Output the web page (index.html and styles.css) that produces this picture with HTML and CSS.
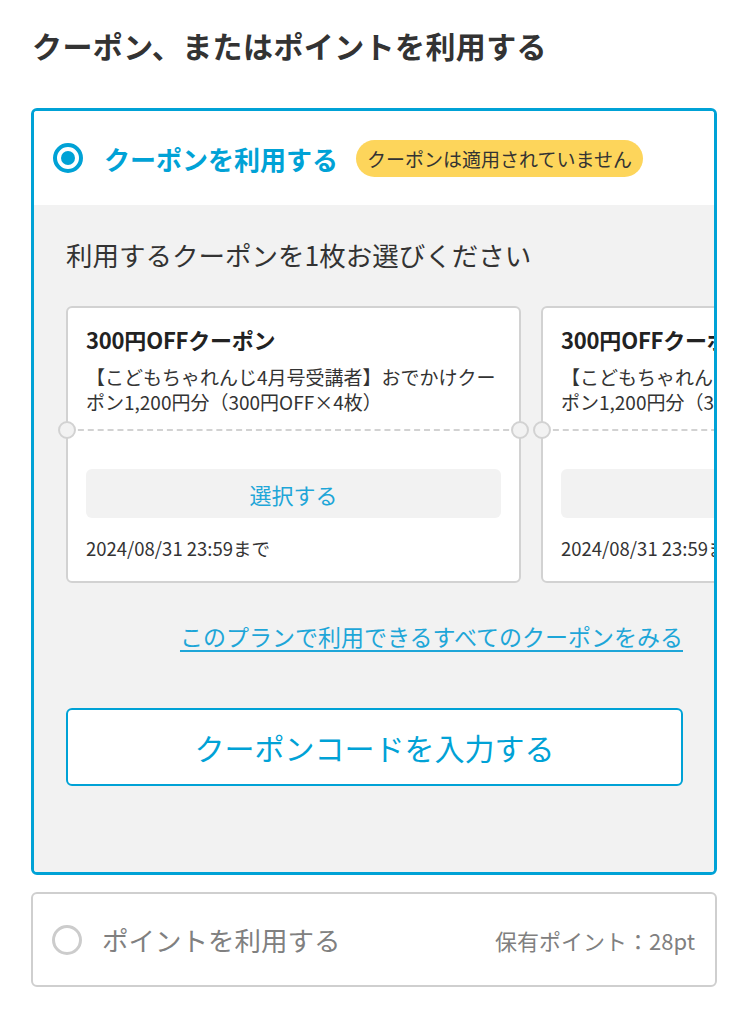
FILE: index.html
```html
<!DOCTYPE html>
<html lang="ja">
<head>
    <meta charset="UTF-8">
    <meta name="viewport" content="width=device-width, initial-scale=1.0">
    <title>クーポン、またはポイントを利用する</title>
    <link rel="stylesheet" href="styles.css">
</head>
<body>
    <div class="page">
        <h1 class="page-title">クーポン、またはポイントを利用する</h1>

        <div class="option-box selected">
            <div class="option-head">
                <span class="radio checked"></span>
                <span class="option-label">クーポンを利用する</span>
                <span class="badge">クーポンは適用されていません</span>
            </div>

            <div class="option-body">
                <p class="lead">利用するクーポンを1枚お選びください</p>

                <div class="coupon-list">
                    <div class="coupon">
                        <div class="coupon-top">
                            <div class="coupon-title">300円OFFクーポン</div>
                            <div class="coupon-desc">【こどもちゃれんじ4月号受講者】おでかけクーポン1,200円分（300円OFF×4枚）</div>
                        </div>
                        <span class="notch left"></span>
                        <span class="notch right"></span>
                        <div class="coupon-bottom">
                            <button class="select-btn">選択する</button>
                            <div class="coupon-date">2024/08/31 23:59まで</div>
                        </div>
                    </div>
                    <div class="coupon">
                        <div class="coupon-top">
                            <div class="coupon-title">300円OFFクーポン</div>
                            <div class="coupon-desc">【こどもちゃれんじ4月号受講者】おでかけクーポン1,200円分（300円OFF×4枚）</div>
                        </div>
                        <span class="notch left"></span>
                        <span class="notch right"></span>
                        <div class="coupon-bottom">
                            <button class="select-btn">選択する</button>
                            <div class="coupon-date">2024/08/31 23:59まで</div>
                        </div>
                    </div>
                </div>

                <div class="all-link-row">
                    <a class="all-link" href="#">このプランで利用できるすべてのクーポンをみる</a>
                </div>

                <button class="code-btn">クーポンコードを入力する</button>
            </div>
        </div>

        <div class="option-box points">
            <span class="radio"></span>
            <span class="option-label muted">ポイントを利用する</span>
            <span class="points-owned">保有ポイント：28pt</span>
        </div>
    </div>
</body>
</html>
```

FILE: styles.css
```css
body {
    margin: 0;
    font-family: "Noto Sans CJK JP", "Noto Sans", sans-serif;
    color: #333;
    background: #fff;
}
.page {
    padding: 25px 31px 30px 31px;
}
.page-title {
    margin: 0 0 43px 1px;
    font-size: 30px;
    line-height: 40px;
    font-weight: 700;
    letter-spacing: 0.4px;
    color: #333;
}
.option-box {
    border-radius: 6px;
    overflow: hidden;
}
.option-box.selected {
    border: 3px solid #00a2d6;
}
.option-head {
    height: 94px;
    display: flex;
    align-items: center;
    padding-left: 19px;
    background: #fff;
}
.radio {
    width: 30px;
    height: 30px;
    box-sizing: border-box;
    border-radius: 50%;
    border: 3px solid #ccc;
    flex: 0 0 30px;
    position: relative;
}
.radio.checked {
    border: 4px solid #00a2d6;
}
.radio.checked::after {
    content: "";
    position: absolute;
    left: 4px;
    top: 4px;
    width: 14px;
    height: 14px;
    border-radius: 50%;
    background: #00a2d6;
}
.option-label {
    margin-left: 21px;
    font-size: 26px;
    font-weight: 700;
    color: #00a2d6;
}
.option-label.muted {
    font-weight: 400;
    font-size: 26.5px;
    color: #808080;
    margin-left: 20px;
}
.badge {
    margin-left: 18px;
    height: 37px;
    line-height: 37px;
    padding: 0 11px;
    border-radius: 19px;
    background: #fdd55b;
    font-size: 19px;
    color: #333;
}
.option-body {
    background: #f2f2f2;
    padding: 32px 31px 86px 32px;
}
.lead {
    margin: 0;
    font-size: 26.5px;
    line-height: 36px;
    color: #333;
}
.coupon-list {
    display: flex;
    gap: 20px;
    overflow: hidden;
    margin: 33px -31px 0 -32px;
    padding-left: 32px;
}
.coupon {
    flex: 0 0 455px;
    box-sizing: border-box;
    background: #fff;
    border: 2px solid #d2d2d2;
    border-radius: 6px;
    position: relative;
}
.coupon-top {
    padding: 16px 18px 15px 18px;
    border-bottom: 2px dashed #d2d2d2;
}
.coupon-title {
    font-size: 22px;
    font-weight: 700;
    line-height: 30px;
    letter-spacing: -0.2px;
    color: #222;
}
.coupon-desc {
    margin-top: 10px;
    font-size: 19px;
    line-height: 25px;
    color: #333;
}
.notch {
    position: absolute;
    top: 113px;
    width: 18px;
    height: 18px;
    box-sizing: border-box;
    border: 2px solid #d2d2d2;
    border-radius: 50%;
    background: #f2f2f2;
}
.notch.left {
    left: -10px;
}
.notch.right {
    right: -10px;
}
.coupon-bottom {
    padding: 38px 18px 22px 18px;
}
.select-btn {
    display: block;
    width: 100%;
    height: 49px;
    border: none;
    border-radius: 6px;
    background: #f2f2f2;
    font-family: inherit;
    font-size: 22px;
    color: #1ea6d8;
}
.coupon-date {
    margin-top: 19px;
    font-size: 18.5px;
    line-height: 22px;
    color: #333;
}
.all-link-row {
    margin-top: 37px;
    text-align: right;
}
.all-link {
    font-size: 23px;
    line-height: 32px;
    color: #1ea6d8;
    text-decoration: underline;
    text-underline-offset: 4px;
}
.code-btn {
    display: block;
    width: 100%;
    height: 78px;
    margin-top: 56px;
    background: #fff;
    border: 2px solid #00a2d6;
    border-radius: 6px;
    font-family: inherit;
    font-size: 30px;
    color: #00a2d6;
}
.option-box.points {
    margin-top: 17px;
    height: 95px;
    box-sizing: border-box;
    border: 2px solid #cfcfcf;
    display: flex;
    align-items: center;
    padding: 0 20px 0 19px;
}
.points-owned {
    margin-left: auto;
    font-size: 22px;
    color: #808080;
}
```
